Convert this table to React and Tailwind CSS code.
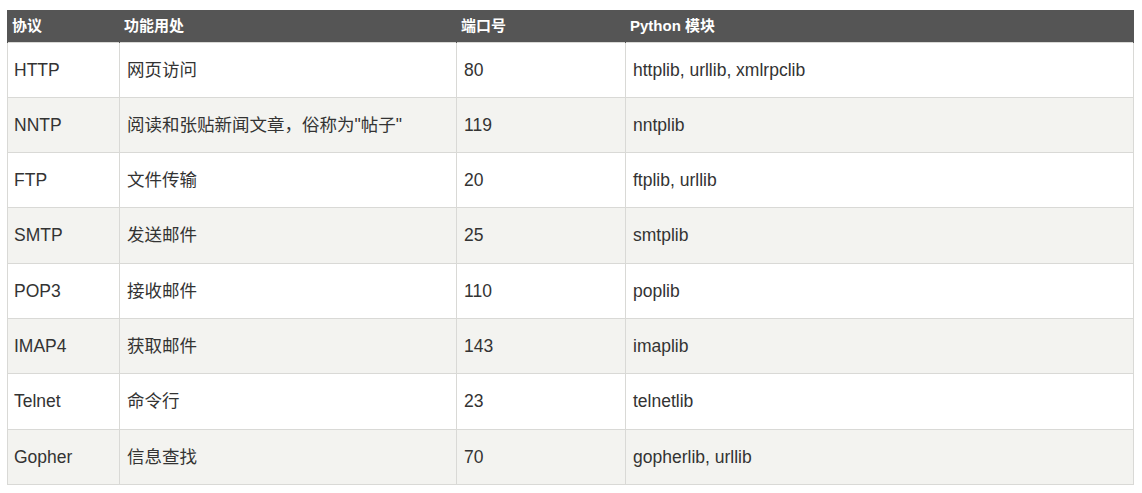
const rows = [
  ["HTTP", "网页访问", "80", "httplib, urllib, xmlrpclib"],
  ["NNTP", "阅读和张贴新闻文章，俗称为\"帖子\"", "119", "nntplib"],
  ["FTP", "文件传输", "20", "ftplib, urllib"],
  ["SMTP", "发送邮件", "25", "smtplib"],
  ["POP3", "接收邮件", "110", "poplib"],
  ["IMAP4", "获取邮件", "143", "imaplib"],
  ["Telnet", "命令行", "23", "telnetlib"],
  ["Gopher", "信息查找", "70", "gopherlib, urllib"],
];

const heads = ["协议", "功能用处", "端口号", "Python 模块"];

export default function App() {
  return (
    <div
      className="bg-white pt-[10px] pl-[7px] pr-[8px] pb-[8px]"
      style={{ fontFamily: '"Liberation Sans", Arial, "Noto Sans CJK SC", sans-serif' }}
    >
      <table className="w-full table-fixed border-collapse text-[17.5px] text-[#333]">
        <colgroup>
          <col className="w-[112px]" />
          <col className="w-[337px]" />
          <col className="w-[169px]" />
          <col />
        </colgroup>
        <thead>
          <tr className="h-[32px] bg-[#555555] text-white">
            {heads.map((h) => (
              <th key={h} className="px-[4px] text-left text-[15px] font-bold border-x border-[#555555]">
                {h}
              </th>
            ))}
          </tr>
        </thead>
        <tbody>
          {rows.map((r, i) => (
            <tr key={r[0]} className={i % 2 ? "h-[55.3px] bg-[#f3f3f0]" : "h-[55.3px] bg-white"}>
              {r.map((c, j) => (
                <td
                  key={j}
                  className={
                    j === 0
                      ? "border border-[#d9d9d6] pl-[6px] pr-[7px] align-middle whitespace-nowrap"
                      : "border border-[#d9d9d6] px-[7px] align-middle whitespace-nowrap"
                  }
                >
                  {c}
                </td>
              ))}
            </tr>
          ))}
        </tbody>
      </table>
    </div>
  );
}
